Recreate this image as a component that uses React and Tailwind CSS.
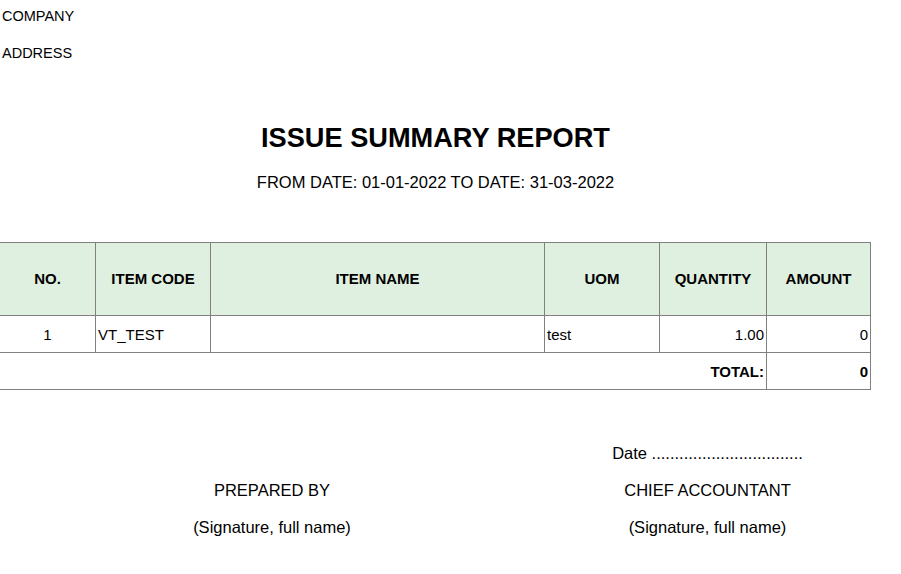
export default function App() {
    const font = { fontFamily: '"Liberation Sans", Arial, sans-serif' };
    return (
        <div className="w-[901px] h-[574px] bg-white text-black overflow-hidden" style={font}>
            {/** Header */}
            <div className="h-[37px] leading-[33px] pl-[2px] text-[14.5px]">COMPANY</div>
            <div className="h-[37px] leading-[33px] pl-[2px] text-[14.5px]">ADDRESS</div>
            {/** Title */}
            <div className="w-[871px] mt-[48px] text-center text-[27.2px] leading-[32px] font-bold">ISSUE SUMMARY REPORT</div>
            <div className="w-[871px] mt-[18px] text-center text-[16.5px] leading-[20px]">FROM DATE: 01-01-2022 TO DATE: 31-03-2022</div>
            {/** Table */}
            <div className="mt-[50px] w-[871px] border-t border-[#808080] grid grid-cols-[96px_115px_334px_115px_107px_104px] text-[15px]">
                {['NO.', 'ITEM CODE', 'ITEM NAME', 'UOM', 'QUANTITY', 'AMOUNT'].map((h) => (
                    <div key={h} className="h-[73px] bg-[#e0f0e0] border-b border-r border-[#808080] flex items-center justify-center font-bold">
                        {h}
                    </div>
                ))}
                <div className="h-[37px] pt-[2px] border-b border-r border-[#808080] flex items-center justify-center">1</div>
                <div className="h-[37px] pt-[2px] border-b border-r border-[#808080] flex items-center pl-[2px]">VT_TEST</div>
                <div className="h-[37px] border-b border-r border-[#808080]"></div>
                <div className="h-[37px] pt-[2px] border-b border-r border-[#808080] flex items-center pl-[2px]">test</div>
                <div className="h-[37px] pt-[2px] border-b border-r border-[#808080] flex items-center justify-end pr-[2px]">1.00</div>
                <div className="h-[37px] pt-[2px] border-b border-r border-[#808080] flex items-center justify-end pr-[2px]">0</div>
                {/** Total */}
                <div className="col-span-5 h-[37px] pt-[2px] border-b border-r border-[#808080] flex items-center justify-end pr-[2px] font-bold">TOTAL:</div>
                <div className="h-[37px] pt-[2px] border-b border-r border-[#808080] flex items-center justify-end pr-[2px] font-bold">0</div>
            </div>
            {/** Signatures */}
            <div className="mt-[45px] grid grid-cols-[544px_327px] text-[16.5px] leading-[37px] text-center">
                <div></div>
                <div>Date .................................</div>
                <div>PREPARED BY</div>
                <div>CHIEF ACCOUNTANT</div>
                <div>(Signature, full name)</div>
                <div>(Signature, full name)</div>
            </div>
        </div>
    );
}
